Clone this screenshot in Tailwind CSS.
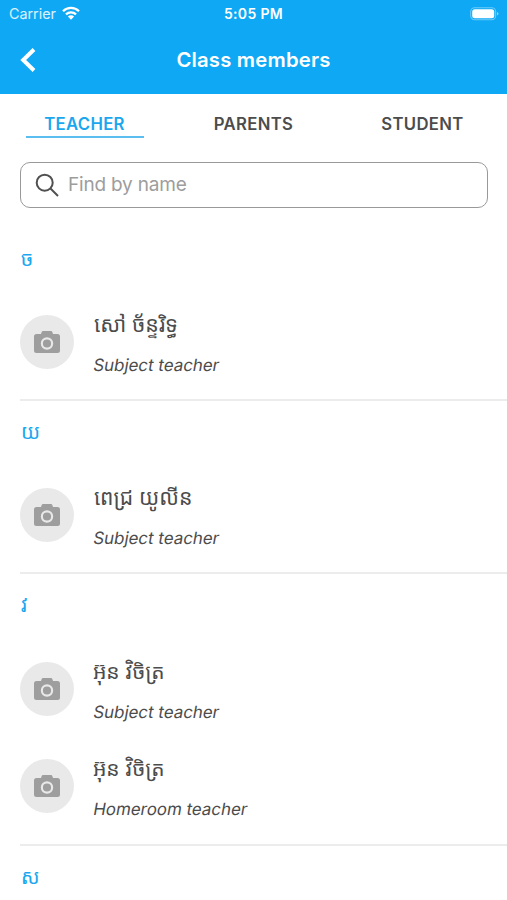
<!DOCTYPE html>
<html lang="en">
<head>
<meta charset="utf-8">
<title>Class members</title>
<script src="https://cdn.jsdelivr.net/npm/@tailwindcss/browser@4"></script>
</head>
<body class="w-[507px] h-[900px] overflow-hidden bg-white font-['Inter','Noto_Sans_Khmer','Khmer_OS',sans-serif] text-[#4c4c4c]">
<svg class="hidden">
  <symbol id="camera" viewBox="0 0 26 22"><path fill="#9e9e9e" fill-rule="evenodd" d="M2.500 3H7L7.700.9Q8 0 9 0h8q1 0 1.300.9L19 3h4.500Q26 3 26 5.500v14q0 2.500-2.500 2.500h-21Q0 22 0 19.500v-14Q0 3 2.500 3zM13 6.300a6.200 6.200 0 1 0 0 12.400a6.200 6.200 0 1 0 0-12.400zM13 8.400a4.100 4.100 0 1 1 0 8.200a4.100 4.100 0 1 1 0-8.200z"/></symbol>
</svg>
<header class="h-[94px] bg-[#0ea8f5] text-white">
  <div class="grid grid-cols-3 items-center h-[27px] px-[9px]">
    <div class="flex items-center gap-[6px] text-[14.300px] leading-[27px]"><span class="w-[47px] whitespace-nowrap text-white/85">Carrier</span>
      <svg class="w-[18px] h-[14px] mt-[-2px]" viewBox="0 0 18 14"><g fill="none" stroke="#fff" stroke-width="2.300"><path d="M1 5.200a11.400 11.400 0 0 1 16 0"/><path d="M4 8.300a7.200 7.200 0 0 1 10 0"/></g><path fill="#fff" d="M9 13.700 5.900 10.500a4.400 4.400 0 0 1 6.200 0z"/></svg>
    </div>
    <div class="text-center text-[14px] leading-[27px] font-semibold tracking-[0.350px] whitespace-nowrap">5:05 PM</div>
    <div class="flex justify-end items-center">
      <svg class="w-[29px] h-[14px] mr-[-1px]" viewBox="0 0 29 14"><rect x=".7" y=".7" width="25" height="12" rx="4" fill="none" stroke="#fff" stroke-opacity=".4" stroke-width="1.100"/><rect x="2.200" y="2.200" width="22" height="9" rx="2.500" fill="#fff"/><path d="M27 5v3.500q1.500-.6 1.500-1.750T27 5z" fill="#fff" fill-opacity=".5"/></svg>
    </div>
  </div>
  <div class="grid grid-cols-[60px_1fr_60px] items-center h-[66px]">
    <svg class="w-[16px] h-[26px] ml-[20px]" viewBox="0 0 16 26"><path d="M14 2.500 3.200 13 14 23.500" fill="none" stroke="#fff" stroke-width="4"/></svg>
    <h1 class="text-center text-[20.300px] font-semibold leading-[24px] tracking-[0.200px]">Class members</h1>
  </div>
</header>
<nav class="grid grid-cols-3 h-[44px] pt-[18px] text-center text-[16.700px] font-semibold leading-[24px] tracking-[0.340px]">
  <div class="flex items-start justify-center text-[#1ba7ee]"><span class="w-[118px] border-b-2 border-[#5bbef0]">TEACHER</span></div>
  <div>PARENTS</div>
  <div>STUDENT</div>
</nav>
<div class="flex items-center mt-[24px] ml-[20px] w-[468px] h-[46px] border border-[#999] rounded-[10px] pl-[14px]">
  <svg class="w-[24px] h-[24px]" viewBox="0 0 24 24" fill="none" stroke="#505050" stroke-width="2"><circle cx="9.700" cy="9.700" r="8"/><path d="m15.500 15.500 7.500 7.500"/></svg>
  <span class="ml-[9px] text-[19px] leading-[24px] tracking-[-0.200px] text-[#9d9d9d]">Find by name</span>
</div>
<main class="pl-[20px]">
  <section class="h-[193px] pt-[36px] border-b-2 border-[#ececec]">
    <h2 class="h-[30px] pl-px leading-[30px] text-[20px] text-[#1ba7ee]">ច</h2>
    <div class="flex items-center mt-[41px] h-[54px]">
      <div class="flex items-center justify-center size-[54px] rounded-full bg-[#e9e9e9]"><svg class="w-[26px] h-[22px]"><use href="#camera"/></svg></div>
      <div class="ml-[20px]"><p class="h-[40px] leading-[39px] text-[21.400px] whitespace-nowrap">សៅ ច័ន្ទរិទ្ធ</p><p class="h-[35px] leading-[40px] text-[16.900px] -skew-x-[10deg]">Subject teacher</p></div>
    </div>
  </section>
  <section class="h-[173px] pt-[16px] border-b-2 border-[#ececec]">
    <h2 class="h-[30px] pl-px leading-[30px] text-[20px] text-[#1ba7ee]">យ</h2>
    <div class="flex items-center mt-[41px] h-[54px]">
      <div class="flex items-center justify-center size-[54px] rounded-full bg-[#e9e9e9]"><svg class="w-[26px] h-[22px]"><use href="#camera"/></svg></div>
      <div class="ml-[20px]"><p class="h-[40px] leading-[39px] text-[21.200px] whitespace-nowrap">ពេជ្រ យូលីន</p><p class="h-[35px] leading-[40px] text-[16.900px] -skew-x-[10deg]">Subject teacher</p></div>
    </div>
  </section>
  <section class="h-[272px] pt-[16px] border-b-2 border-[#ececec]">
    <h2 class="h-[30px] pl-px leading-[30px] text-[20px] text-[#1ba7ee]">វ</h2>
    <div class="flex items-center mt-[42px] h-[54px]">
      <div class="flex items-center justify-center size-[54px] rounded-full bg-[#e9e9e9]"><svg class="w-[26px] h-[22px]"><use href="#camera"/></svg></div>
      <div class="ml-[19px]"><p class="h-[40px] leading-[39px] text-[21px] whitespace-nowrap">អ៊ុន វិចិត្រ</p><p class="h-[35px] pl-px leading-[40px] text-[16.900px] -skew-x-[10deg]">Subject teacher</p></div>
    </div>
    <div class="flex items-center mt-[43px] h-[54px]">
      <div class="flex items-center justify-center size-[54px] rounded-full bg-[#e9e9e9]"><svg class="w-[26px] h-[22px]"><use href="#camera"/></svg></div>
      <div class="ml-[19px]"><p class="h-[40px] leading-[39px] text-[21px] whitespace-nowrap">អ៊ុន វិចិត្រ</p><p class="h-[35px] pl-px leading-[40px] text-[16.900px] -skew-x-[10deg]">Homeroom teacher</p></div>
    </div>
  </section>
  <section class="pt-[16px]">
    <h2 class="h-[30px] pl-px leading-[30px] text-[20px] text-[#1ba7ee]">ស</h2>
  </section>
</main>
</body>
</html>
